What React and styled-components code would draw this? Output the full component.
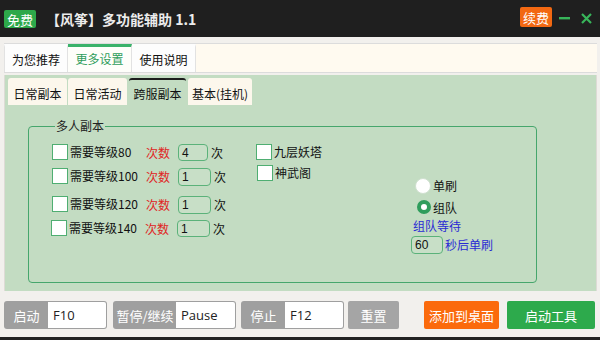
import React from 'react';
import styled, { createGlobalStyle } from 'styled-components';

const GlobalStyle = createGlobalStyle`
	html, body {
		margin: 0;
		padding: 0;
		background: #f2f0ed;
	}
	* {
		box-sizing: border-box;
	}
`;

const FONT = `"Noto Sans CJK SC", "Noto Sans", sans-serif`;

const Window = styled.div`
	width: 600px;
	height: 340px;
	display: flex;
	flex-direction: column;
	overflow: hidden;
	font-family: ${FONT};
	font-size: 12px;
	color: #111;
	background: #f2f0ed;
`;

const TitleBar = styled.div`
	height: 37px;
	flex: none;
	display: flex;
	align-items: center;
	padding: 0 8px 0 4px;
	background: #1f1f1f;
`;

const Badge = styled.span`
	display: inline-flex;
	align-items: center;
	justify-content: center;
	height: ${(p) => p.$h}px;
	padding: 0 3px;
	border-radius: 2px;
	background: ${(p) => p.$bg};
	color: #fff;
	font-size: 13px;
	line-height: 1;
	margin-top: ${(p) => p.$top || 0}px;
`;

const Title = styled.div`
	margin-left: 10px;
	flex: 1;
	color: #ececec;
	font-size: 14px;
	font-weight: 700;
	letter-spacing: 0;
`;

const WinButton = styled.span`
	display: inline-flex;
	align-items: center;
	justify-content: center;
	width: ${(p) => p.$w}px;
	margin-left: ${(p) => p.$ml}px;
	color: #38b55a;
`;

const Body = styled.div`
	flex: 1;
	display: flex;
	flex-direction: column;
	padding: 6px 3px 0 4px;
	background: #f2f0ed;
`;

const TopTabs = styled.div`
	height: 30px;
	flex: none;
	display: flex;
	background: #fffaf0;
	border-top: 1px solid #dcdcdc;
	border-bottom: 1px solid #dcdcdc;
`;

const TopTab = styled.div`
	width: 64px;
	display: flex;
	align-items: center;
	justify-content: center;
	background: ${(p) => (p.$active ? '#fefefa' : '#fdfdfd')};
	border-top: 3px solid ${(p) => (p.$active ? '#3ab26a' : 'transparent')};
	border-right: 1px solid #e2e2e2;
	border-left: ${(p) => (p.$first ? '1px solid #e2e2e2' : 'none')};
	color: ${(p) => (p.$active ? '#2e9d5a' : '#111')};
	font-size: 12px;
	padding-bottom: ${(p) => (p.$active ? 3 : 0)}px;
`;

const Panel = styled.div`
	margin-top: 2px;
	height: 216px;
	flex: none;
	display: flex;
	flex-direction: column;
	background: #c3dcc2;
	border-left: 1px solid #dedbd6;
	border-right: 1px solid #dedbd6;
	padding: 3px 0 0 3px;
`;

const SubTabs = styled.div`
	display: flex;
	gap: 1px;
	height: 27px;
`;

const SubTab = styled.div`
	width: ${(p) => p.$w}px;
	display: flex;
	align-items: center;
	justify-content: center;
	border-radius: 3px 3px 0 0;
	background: ${(p) => (p.$active ? '#c3dcc2' : '#fcf7ec')};
	border-top: 2px solid ${(p) => (p.$active ? '#1d1d1d' : 'transparent')};
	margin-left: ${(p) => p.$ml || 0}px;
	font-size: 12px;
	padding-top: 1px;
`;

const Group = styled.fieldset`
	margin: 13px 0 0 20px;
	width: 509px;
	height: 165px;
	padding: 10px 0 0 22px;
	border: 1px solid #46a66c;
	border-radius: 4px;
	display: flex;
	min-width: 0;
`;

const Legend = styled.legend`
	padding: 0 1px;
	margin-left: 4px;
	font-size: 12px;
	line-height: 16px;
	color: #222;
`;

const Columns = styled.div`
	display: flex;
	align-items: flex-start;
	width: 100%;
`;

const LeftCol = styled.div`
	width: 203px;
	display: flex;
	flex-direction: column;
`;

const Row = styled.div`
	height: ${(p) => p.$h}px;
	display: flex;
	align-items: flex-start;
	padding-left: ${(p) => p.$pl}px;
`;

const Box = styled.span`
	width: 16px;
	height: 16px;
	flex: none;
	background: #fff;
	border: 1px solid #4fae72;
	margin-top: ${(p) => p.$mt || 0}px;
`;

const Label = styled.span`
	width: ${(p) => p.$w}px;
	margin-left: 2px;
	line-height: 16px;
	color: #111;
	white-space: nowrap;
`;

const Red = styled.span`
	width: 32px;
	line-height: 18px;
	color: #e02424;
`;

const Field = styled.span`
	width: ${(p) => p.$w}px;
	height: ${(p) => p.$h}px;
	display: inline-flex;
	align-items: center;
	padding-left: 3px;
	border: 1px solid #5bb27a;
	border-radius: 4px;
	background: #c8dfc7;
	font-family: "Liberation Sans", Arial, sans-serif;
	font-size: 12px;
	color: #111;
	margin-top: ${(p) => p.$mt || 0}px;
`;

const Unit = styled.span`
	margin-left: 3px;
	line-height: 18px;
`;

const MidCol = styled.div`
	width: 157px;
	display: flex;
	flex-direction: column;
	gap: 5px;
`;

const RightCol = styled.div`
	display: flex;
	flex-direction: column;
	margin-top: 31px;
`;

const RadioRow = styled.div`
	display: flex;
	align-items: center;
	height: ${(p) => p.$h}px;
	padding-left: ${(p) => p.$pl}px;
`;

const Radio = styled.span`
	width: ${(p) => (p.$on ? 14 : 16)}px;
	height: ${(p) => (p.$on ? 14 : 16)}px;
	border-radius: 50%;
	background: #fff;
	border: ${(p) => (p.$on ? '4px solid #2f9d5c' : '1px solid #cfe0cf')};
	flex: none;
	margin-right: 2px;
`;

const Blue = styled.span`
	color: #2a2ad4;
	line-height: 16px;
	margin-left: ${(p) => p.$ml || 0}px;
`;

const WaitRow = styled.div`
	display: flex;
	align-items: center;
	margin-top: 2px;
`;

const Bar = styled.div`
	margin-top: 10px;
	height: 28px;
	flex: none;
	display: flex;
	align-items: stretch;
	padding-left: 0;
`;

const Hotkey = styled.div`
	display: flex;
	margin-right: ${(p) => p.$mr}px;
	background: #9f9f9f;
	border-radius: 3px;
	padding: 1px;
`;

const HotkeyLabel = styled.span`
	width: ${(p) => p.$w}px;
	display: flex;
	align-items: center;
	justify-content: center;
	color: #fff;
	font-size: 13px;
`;

const HotkeyInput = styled.span`
	width: ${(p) => p.$w}px;
	display: flex;
	align-items: center;
	padding-left: 5px;
	background: #fff;
	border-radius: 0 2px 2px 0;
	font-family: "Open Sans", "Liberation Sans", sans-serif;
	font-size: 13px;
	color: #222;
`;

const Button = styled.span`
	width: ${(p) => p.$w}px;
	margin-right: ${(p) => p.$mr || 0}px;
	display: flex;
	align-items: center;
	justify-content: center;
	background: ${(p) => p.$bg};
	border-radius: 2px;
	color: #fff;
	font-size: 13px;
`;

const BottomEdge = styled.div`
	margin-top: auto;
	height: 3px;
	margin-left: -4px;
	margin-right: -3px;
	background: #222;
`;

const levels = [
	{ name: '需要等级80', count: '4', h: 24, pl: 1, w: 30, fh: 17 },
	{ name: '需要等级100', count: '1', h: 28, pl: 1, w: 33, fh: 18 },
	{ name: '需要等级120', count: '1', h: 24, pl: 1, w: 33, fh: 18 },
	{ name: '需要等级140', count: '1', h: 24, pl: 0, w: 33, fh: 17 },
];

const App = () => {
	return (
		<>
			<GlobalStyle />
			<Window>
				<TitleBar>
					<Badge $bg="#2da84a" $h={18} $top={1}>免费</Badge>
					<Title>【风筝】多功能辅助 1.1</Title>
					<Badge $bg="#f26812" $h={20} $top={-3}>续费</Badge>
					<WinButton $w={12} $ml={6}>
						<svg width="11" height="3" viewBox="0 0 11 3">
							<rect x="0" y="0" width="11" height="2.4" fill="#38b55a" />
						</svg>
					</WinButton>
					<WinButton $w={12} $ml={10}>
						<svg width="11" height="11" viewBox="0 0 11 11">
							<path d="M1 1 L10 10 M10 1 L1 10" stroke="#38b55a" strokeWidth="2.2" />
						</svg>
					</WinButton>
				</TitleBar>
				<Body>
					<TopTabs>
						<TopTab $first>为您推荐</TopTab>
						<TopTab $active>更多设置</TopTab>
						<TopTab>使用说明</TopTab>
					</TopTabs>
					<Panel>
						<SubTabs>
							<SubTab $w={59}>日常副本</SubTab>
							<SubTab $w={59}>日常活动</SubTab>
							<SubTab $w={57} $ml={1} $active>跨服副本</SubTab>
							<SubTab $w={64} $ml={1}>基本(挂机)</SubTab>
						</SubTabs>
						<Group>
							<Legend>多人副本</Legend>
							<Columns>
								<LeftCol>
									{levels.map((lv) => (
										<Row key={lv.name} $h={lv.h} $pl={lv.pl}>
											<Box />
											<Label $w={76}>{lv.name}</Label>
											<Red>次数</Red>
											<Field $w={lv.w} $h={lv.fh}>{lv.count}</Field>
											<Unit>次</Unit>
										</Row>
									))}
								</LeftCol>
								<MidCol>
									<Row $h={16} $pl={2}>
										<Box />
										<Label $w={60}>九层妖塔</Label>
									</Row>
									<Row $h={16} $pl={3}>
										<Box />
										<Label $w={60}>神武阁</Label>
									</Row>
								</MidCol>
								<RightCol>
									<RadioRow $h={21} $pl={4}>
										<Radio />
										单刷
									</RadioRow>
									<RadioRow $h={22} $pl={6}>
										<Radio $on />
										组队
									</RadioRow>
									<Blue $ml={2}>组队等待</Blue>
									<WaitRow>
										<Field $w={32} $h={18}>60</Field>
										<Blue $ml={2}>秒后单刷</Blue>
									</WaitRow>
								</RightCol>
							</Columns>
						</Group>
					</Panel>
					<Bar>
						<Hotkey $mr={6}>
							<HotkeyLabel $w={43}>启动</HotkeyLabel>
							<HotkeyInput $w={58}>F10</HotkeyInput>
						</Hotkey>
						<Hotkey $mr={5}>
							<HotkeyLabel $w={62}>暂停/继续</HotkeyLabel>
							<HotkeyInput $w={59}>Pause</HotkeyInput>
						</Hotkey>
						<Hotkey $mr={4}>
							<HotkeyLabel $w={43}>停止</HotkeyLabel>
							<HotkeyInput $w={58}>F12</HotkeyInput>
						</Hotkey>
						<Button $w={51} $mr={25} $bg="#a5a5a5">重置</Button>
						<Button $w={75} $mr={8} $bg="#fb6a0c">添加到桌面</Button>
						<Button $w={88} $bg="#2daa4c">启动工具</Button>
					</Bar>
					<BottomEdge />
				</Body>
			</Window>
		</>
	);
};

export default App;
